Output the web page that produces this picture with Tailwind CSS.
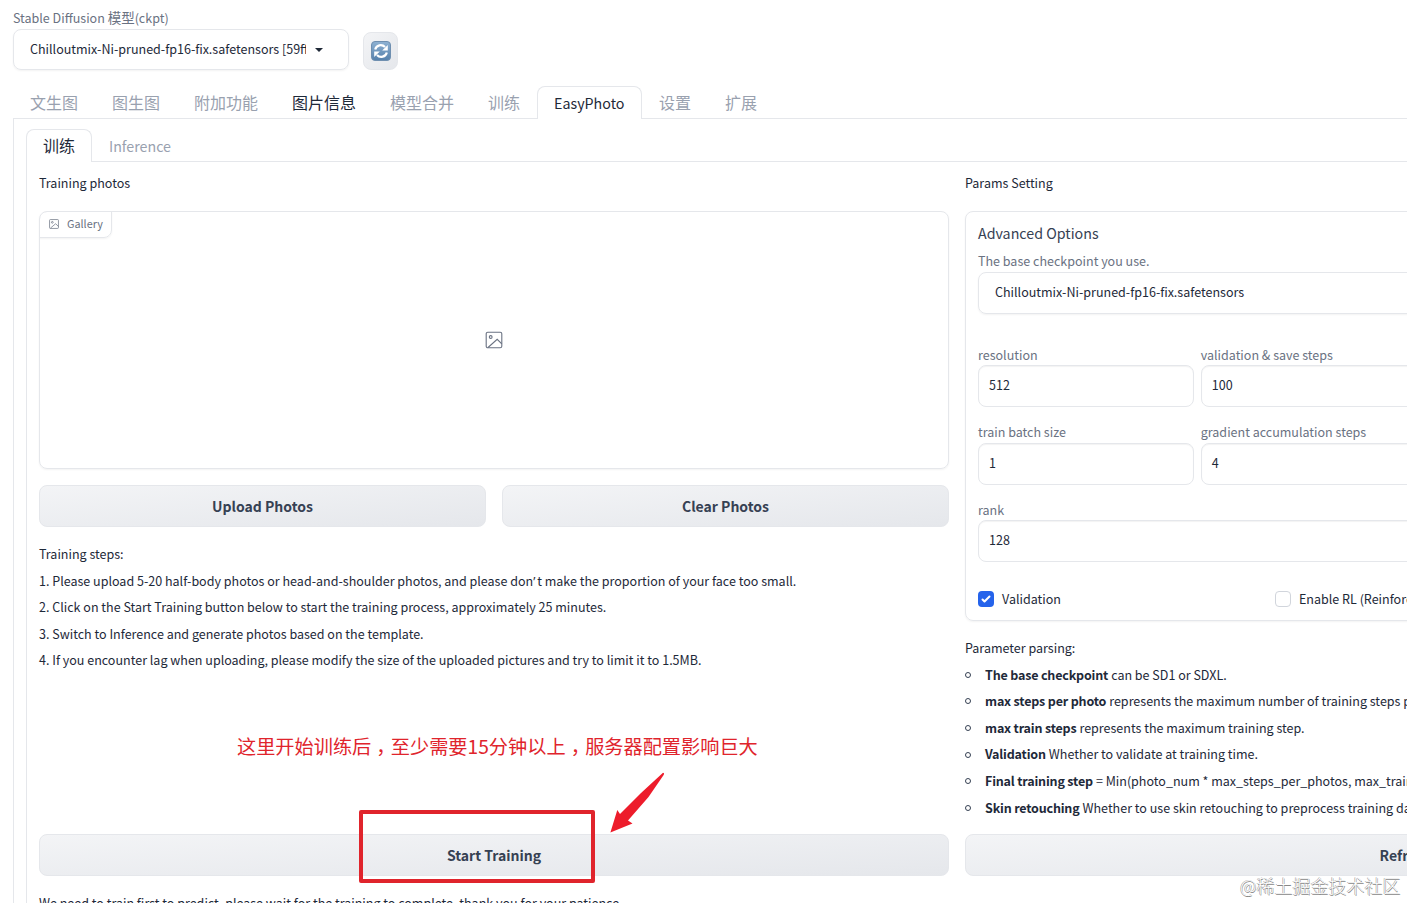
<!DOCTYPE html>
<html lang="zh-CN">
<head>
    <meta charset="UTF-8">
    <meta name="viewport" content="width=device-width, initial-scale=1.0">
    <title>Stable Diffusion</title>
    <script src="https://cdn.jsdelivr.net/npm/@tailwindcss/browser@4"></script>
</head>
<body class="bg-white text-gray-800 font-['Noto_Sans_CJK_SC',sans-serif] text-[12.53px] leading-5">
    <div class="relative w-[1407px] h-[903px] overflow-hidden pl-[13px] pt-[7px] whitespace-nowrap">

        <!-- Checkpoint selector -->
        <header class="flex h-[63px]">
            <div class="w-[336px]">
                <label class="block h-[22px] text-gray-500">Stable Diffusion <span class="text-[13.5px]">模型</span>(ckpt)</label>
                <div class="flex items-center h-[41px] pl-4 border border-gray-200 rounded-lg shadow-xs">
                    <span class="w-[276px] pb-0.5 overflow-hidden">Chilloutmix-Ni-pruned-fp16-fix.safetensors [59ff</span>
                    <svg class="ml-[9px] w-2 h-1" viewBox="0 0 8 4"><path d="M0 0h8L4 4z" fill="#1f2937"/></svg>
                </div>
            </div>
            <button class="flex items-center justify-center ml-[14px] mt-[25px] w-[35px] h-[38px] rounded-lg border border-gray-200 bg-linear-to-br from-gray-100 to-gray-200">
                <svg class="w-5 h-5" viewBox="0 0 20 20" fill="none">
                    <defs><linearGradient id="blue" x1="0" y1="0" x2="0" y2="1"><stop stop-color="#8fb2d3"/><stop offset="1" stop-color="#5580ab"/></linearGradient></defs>
                    <rect x=".5" y=".5" width="19" height="19" rx="3.5" fill="url(#blue)" stroke="#6f8fb0"/>
                    <path d="M4.2 8.6C5.2 3.9 11 2.8 14 6.1M15.8 11.4C14.8 16.1 9 17.2 6 13.9" stroke="#fff" stroke-width="2.2"/>
                    <path d="M16.8 4v5.4h-5.6zM3.2 16v-5.4h5.6z" fill="#fff"/>
                </svg>
            </button>
        </header>

        <!-- Main tabs -->
        <nav class="flex mt-4 h-[33px] text-base leading-5 text-gray-400 border-b border-gray-200 *:pt-1.5 *:px-[17px]">
            <span>文生图</span>
            <span>图生图</span>
            <span>附加功能</span>
            <span class="text-gray-800">图片信息</span>
            <span>模型合并</span>
            <span>训练</span>
            <span class="h-[33px] w-[105px] text-[14.25px] text-gray-800 bg-white border border-b-0 border-gray-200 rounded-t-lg !px-4">EasyPhoto</span>
            <span>设置</span>
            <span>扩展</span>
        </nav>

        <main class="h-[900px] border-l border-gray-200 pl-3 pt-[10px]">
            <nav class="flex h-[33px] border-b border-gray-200 text-gray-400">
                <span class="h-[33px] w-[66px] pt-[5px] pl-4 text-base leading-5 text-gray-800 bg-white border border-b-0 border-gray-200 rounded-t-lg">训练</span>
                <span class="pt-[7px] pl-[17px] text-[14.25px]">Inference</span>
            </nav>

            <div class="flex gap-4 h-[860px] pl-3 pt-[11px] border-l border-gray-200">
                <!-- Training column -->
                <section class="w-[910px] shrink-0">
                    <p>Training photos</p>
                    <div class="mt-[18px] h-[258px] flex items-center justify-center relative border border-gray-200 rounded-lg overflow-hidden shadow-xs">
                        <div class="absolute -left-px -top-px flex items-center h-[27px] w-[73px] pl-[9px] pb-[3px] gap-2 border border-gray-200 rounded-tl-lg rounded-br-lg text-[10.8px] text-gray-500 shadow-xs">
                            <svg class="mt-0.5 w-[10px] h-[10px]" viewBox="0 0 18 18" fill="none" stroke="currentColor" stroke-width="1.3"><rect x="1" y="1" width="16" height="16" rx="1.5"/><circle cx="6" cy="6" r="1.6"/><path d="M2.5 16.5l9.5-8 5 5"/></svg>
                            Gallery
                        </div>
                        <svg class="w-[18px] h-[18px] text-gray-500" viewBox="0 0 18 18" fill="none" stroke="currentColor" stroke-width="1.1"><rect x="1.2" y="1.2" width="15.6" height="15.6" rx="1.6"/><circle cx="5.7" cy="6" r="1.4"/><path d="M3 16.5l9.2-8.2 4.6 4.6"/></svg>
                    </div>
                    <div class="flex gap-4 mt-4 text-sm font-bold text-gray-700">
                        <button class="flex-1 h-[42px] border border-gray-200 rounded-lg bg-linear-to-br from-gray-100 to-gray-200">Upload Photos</button>
                        <button class="flex-1 h-[42px] border border-gray-200 rounded-lg bg-linear-to-br from-gray-100 to-gray-200">Clear Photos</button>
                    </div>
                    <div class="mt-[14px] h-[293px] leading-[26.5px]">
                        <p>Training steps:</p>
                        <p class="h-[26.5px]">1. Please upload 5-20 half-body photos or head-and-shoulder photos, and please don<span class="inline-block w-[4px] leading-none font-['Open_Sans']">’</span>t make the proportion of your face too small.</p>
                        <p>2. Click on the Start Training button below to start the training process, approximately 25 minutes.</p>
                        <p>3. Switch to Inference and generate photos based on the template.</p>
                        <p>4. If you encounter lag when uploading, please modify the size of the uploaded pictures and try to limit it to 1.5MB.</p>
                    </div>
                    <button class="w-full h-[42px] border border-gray-200 rounded-lg bg-linear-to-br from-gray-100 to-gray-200 text-sm font-bold text-gray-700">Start Training</button>
                    <p class="mt-[17px]">We need to train first to predict, please wait for the training to complete, thank you for your patience.</p>
                </section>

                <!-- Params column -->
                <section class="w-[910px] shrink-0">
                    <p>Params Setting</p>
                    <div class="mt-[18px] h-[410px] px-3 pt-[11px] border border-gray-200 rounded-lg shadow-xs">
                        <h2 class="text-[14.25px] text-gray-700">Advanced Options</h2>
                        <label class="block mt-2 h-[21px] text-gray-500">The base checkpoint you use.</label>
                        <div class="flex items-center h-[42px] pl-4 pb-0.5 border border-gray-200 rounded-lg shadow-xs">Chilloutmix-Ni-pruned-fp16-fix.safetensors</div>
                        <div class="grid grid-cols-4 gap-x-[7px] mt-[31px]">
                            <div>
                                <label class="block text-gray-500">resolution</label>
                                <div class="flex items-center h-[42px] pl-[10px] pb-0.5 border border-gray-200 rounded-lg inset-shadow-xs">512</div>
                            </div>
                            <div>
                                <label class="block text-gray-500">validation &amp; save steps</label>
                                <div class="flex items-center h-[42px] pl-[10px] pb-0.5 border border-gray-200 rounded-lg inset-shadow-xs">100</div>
                            </div>
                        </div>
                        <div class="grid grid-cols-4 gap-x-[7px] mt-[15px]">
                            <div>
                                <label class="block h-[21px] text-gray-500">train batch size</label>
                                <div class="flex items-center h-[42px] pl-[10px] pb-0.5 border border-gray-200 rounded-lg inset-shadow-xs">1</div>
                            </div>
                            <div>
                                <label class="block h-[21px] text-gray-500">gradient accumulation steps</label>
                                <div class="flex items-center h-[42px] pl-[10px] pb-0.5 border border-gray-200 rounded-lg inset-shadow-xs">4</div>
                            </div>
                        </div>
                        <label class="block mt-[15px] text-gray-500">rank</label>
                        <div class="flex items-center h-[42px] pl-[10px] pb-0.5 border border-gray-200 rounded-lg inset-shadow-xs">128</div>
                        <div class="grid grid-cols-3 gap-x-[7px] mt-[27px]">
                            <div class="flex items-center gap-2">
                                <span class="w-4 h-4 rounded bg-[#2563eb]"><svg viewBox="0 0 16 16" fill="#fff"><path d="M12.207 4.793a1 1 0 010 1.414l-5 5a1 1 0 01-1.414 0l-2-2a1 1 0 011.414-1.414L6.5 9.086l4.293-4.293a1 1 0 011.414 0z"/></svg></span>
                                Validation
                            </div>
                            <div class="flex items-center gap-2">
                                <span class="w-4 h-4 rounded border border-gray-300"></span>
                                Enable RL (Reinforcement Learning)
                            </div>
                        </div>
                    </div>
                    <div class="mt-[14px] h-[199px] leading-[26.6px]">
                        <p>Parameter parsing:</p>
                        <ul class="*:flex *:items-center [&_i]:w-[6px] [&_i]:h-[6px] [&_i]:mr-[14px] [&_i]:border [&_i]:border-gray-700 [&_i]:rounded-full [&_b]:mr-[3px] [&_b]:tracking-[-0.18px]">
                            <li><i></i><b>The base checkpoint</b>can be SD1 or SDXL.</li>
                            <li><i></i><b>max steps per photo</b>represents the maximum number of training steps per photo.</li>
                            <li><i></i><b>max train steps</b>represents the maximum training step.</li>
                            <li><i></i><b>Validation</b>Whether to validate at training time.</li>
                            <li><i></i><b>Final training step</b>= Min(photo_num * max_steps_per_photos, max_train_steps).</li>
                            <li><i></i><b>Skin retouching</b>Whether to use skin retouching to preprocess training data face.</li>
                        </ul>
                    </div>
                    <button class="w-full h-[42px] border border-gray-200 rounded-lg bg-linear-to-br from-gray-100 to-gray-200 text-sm font-bold text-gray-700">Refresh Log</button>
                </section>
            </div>
        </main>

        <!-- Annotations -->
        <p class="absolute left-[237px] top-[736px] flex text-[19.2px] text-[#e0242c]">这里开始训练后<span class="w-[19.5px] pl-[5px] overflow-hidden">，</span>至少需要15分钟以上<span class="w-[19.5px] pl-[5px] overflow-hidden">，</span>服务器配置影响巨大</p>
        <div class="absolute left-[359px] top-[810px] w-[236px] h-[73px] border-4 border-[#e0242c] rounded-xs"></div>
        <svg class="absolute left-[605px] top-[768px] w-[64px] h-[68px]" viewBox="0 0 64 68" fill="#ed1c2b"><path d="M58 4.800Q59.700 5 58.800 6.800L43.500 29 23 52.500 27.500 55.400 5.400 64.600 12.300 42 15 46 36 25z"/></svg>
        <div class="absolute left-[1240px] top-[875px] text-[18px] font-light text-white [text-shadow:-0.5px_-0.5px_0_#888,0.5px_0.5px_0_#888]">@稀土掘金技术社区</div>
    </div>
</body>
</html>
